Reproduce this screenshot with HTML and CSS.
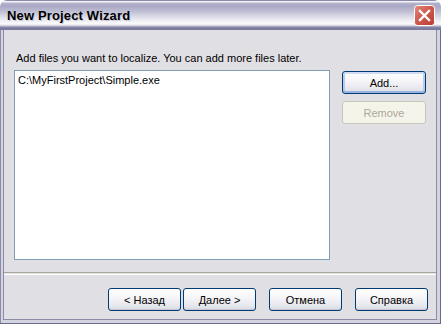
FILE: index.html
```html
<!DOCTYPE html>
<html>
<head>
<meta charset="utf-8">
<link rel="stylesheet" href="styles.css">
</head>
<body>
<div class="window">
  <div class="titlebar">
    <span class="title">New Project Wizard</span>
    <span class="close">
      <svg width="21" height="21" viewBox="0 0 21 21">
        <defs>
          <linearGradient id="cg" x1="0" y1="0" x2="1" y2="1">
            <stop offset="0" stop-color="#e98a7e"/>
            <stop offset="0.45" stop-color="#cf5a4f"/>
            <stop offset="1" stop-color="#b93c33"/>
          </linearGradient>
        </defs>
        <rect x="0.5" y="0.5" width="20" height="20" rx="3" fill="url(#cg)" stroke="#ffffff"/>
        <path d="M6 6 L15 15 M15 6 L6 15" stroke="#ffffff" stroke-width="2.4" stroke-linecap="square"/>
      </svg>
    </span>
  </div>
  <div class="frame">
    <div class="client">
      <div class="content">
        <p class="intro">Add files you want to localize. You can add more files later.</p>
        <div class="main">
          <div class="list">
            <div class="item">C:\MyFirstProject\Simple.exe</div>
          </div>
          <div class="side">
            <button class="btn default">Add...</button>
            <button class="btn" disabled>Remove</button>
          </div>
        </div>
      </div>
      <div class="sep"></div>
      <div class="footer">
        <button class="btn wide">&lt; Назад</button>
        <button class="btn wide">Далее &gt;</button>
        <button class="btn wide gap">Отмена</button>
        <button class="btn wide gap">Справка</button>
      </div>
    </div>
  </div>
</div>
</body>
</html>
```
FILE: styles.css
```css
html, body {
  margin: 0;
  padding: 0;
  background: #ffffff;
}
body {
  font-family: "Liberation Sans", Arial, sans-serif;
  font-size: 11px;
}
.window {
  width: 441px;
  height: 324px;
  box-sizing: border-box;
  display: flex;
  flex-direction: column;
  border-radius: 7px 7px 0 0;
  overflow: hidden;
  background: #c4c4d6;
}
.titlebar {
  height: 30px;
  flex: none;
  box-sizing: border-box;
  display: flex;
  align-items: center;
  justify-content: space-between;
  padding: 0 6px 0 7px;
  border-radius: 7px 7px 0 0;
  background: linear-gradient(to bottom,
    #8a8aa8 0px, #8a8aa8 1px,
    #f4f4f8 1px, #f4f4f8 2px,
    #b3b3cc 3px, #a8a8c6 6px,
    #bcbcd2 11px, #d8d8e6 16px,
    #f0f0f5 21px, #fbfbfc 24px,
    #c8c8d8 26px, #8888a8 27px,
    #7a7a9c 29px, #7a7a9c 30px);
}
.title {
  font-family: "Liberation Sans", Arial, sans-serif;
  font-weight: bold;
  font-size: 13px;
  letter-spacing: 0.15px;
  color: #000000;
  text-shadow: 1px 1px 0 #c8c8d8;
  padding-top: 1px;
}
.close {
  display: block;
  width: 21px;
  height: 21px;
  margin-top: 1px;
}
.close svg {
  display: block;
}
.frame {
  flex: 1;
  display: flex;
  padding: 0 3px 3px 3px;
  background: linear-gradient(to right, #8c8caa 0, #8c8caa 1px, #d4d4e0 1px);
  border-right: 1px solid #6a6a8c;
  border-bottom: 1px solid #6a6a8c;
  box-sizing: border-box;
}
.client {
  flex: 1;
  display: flex;
  flex-direction: column;
  background: #e0dfe3;
  border-left: 1px solid #8c8ca8;
  border-right: 1px solid #8c8ca8;
  border-bottom: 1px solid #8c8ca8;
}
.content {
  padding: 22px 8px 0 10px;
}
.intro {
  margin: 0 0 0 2px;
  height: 13px;
  line-height: 13px;
  color: #000000;
}
.main {
  margin-top: 5px;
  display: flex;
  gap: 12px;
}
.list {
  width: 316px;
  height: 190px;
  box-sizing: border-box;
  border: 1px solid #7f9db9;
  background: #ffffff;
  padding: 3px 3px;
}
.item {
  line-height: 13px;
  color: #000000;
}
.side {
  display: flex;
  flex-direction: column;
  gap: 7px;
  padding-top: 1px;
}
.btn {
  font-family: "Liberation Sans", Arial, sans-serif;
  font-size: 11px;
  color: #000000;
  width: 84px;
  height: 23px;
  box-sizing: border-box;
  border: 1px solid #003c74;
  border-radius: 3px;
  background: linear-gradient(to bottom, #ffffff 0%, #f6f6f9 40%, #e4e4ec 85%, #d6d6e2 100%);
  box-shadow: inset 0 -1px 0 #c8c8d6;
  padding: 0;
  margin: 0;
}
.btn.default {
  box-shadow: inset 0 -2px 0 #98b4e4, inset 0 2px 0 #cfdcf4, inset 2px 0 0 #b8cbee, inset -2px 0 0 #b8cbee;
}
.btn:disabled {
  border-color: #c9c7ba;
  background: #f5f4ea;
  color: #aca899;
  box-shadow: none;
}
.sep {
  margin-top: 12px;
  height: 1px;
  border-top: 1px solid #aca899;
  border-bottom: 1px solid #ffffff;
}
.footer {
  display: flex;
  justify-content: flex-end;
  gap: 2px;
  padding: 13px 8px 0 0;
}
.btn.wide {
  width: 73px;
}
.btn.gap {
  margin-left: 11px;
}
```
